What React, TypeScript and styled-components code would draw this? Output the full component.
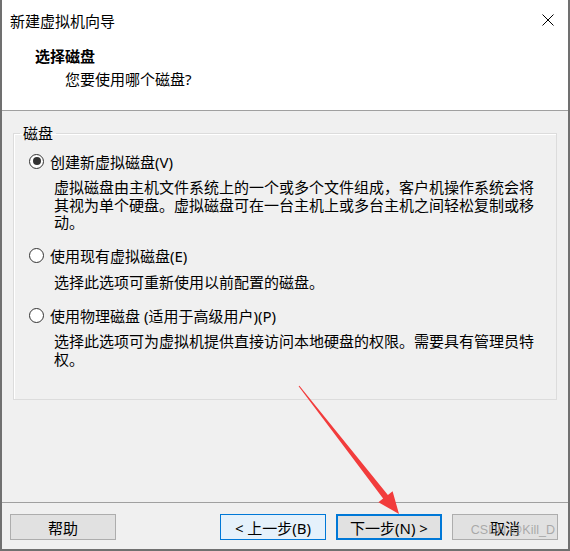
import styled, { createGlobalStyle } from "styled-components";

const GlobalStyle = createGlobalStyle`
  html, body {
    margin: 0;
    padding: 0;
    background: #ffffff;
  }
  body {
    font-family: "Noto Sans", "Noto Sans CJK SC", sans-serif;
    color: #000000;
  }
`;

const Window = styled.div`
  position: relative;
  width: 570px;
  height: 551px;
  box-sizing: border-box;
  border: 2px solid #707070;
  border-top: none;
  background: #f0f0f0;
  display: flex;
  flex-direction: column;
  overflow: hidden;
`;

const Header = styled.div`
  height: 110px;
  background: #ffffff;
  border-bottom: 1px solid #a0a0a0;
  display: flex;
  flex-direction: column;
`;

const TitleBar = styled.div`
  height: 40px;
  display: flex;
  align-items: center;
  justify-content: space-between;
  padding: 0 14px 0 8px;
  font-size: 15px;
`;

const CloseButton = styled.div`
  width: 12px;
  height: 12px;
  display: flex;
`;

const HeaderContent = styled.div`
  padding: 6px 0 0 33px;
  display: flex;
  flex-direction: column;
`;

const Heading = styled.div`
  font-size: 15px;
  font-weight: 700;
  line-height: 20px;
`;

const SubHeading = styled.div`
  font-size: 15px;
  line-height: 20px;
  margin: 3px 0 0 30px;
`;

const Body = styled.div`
  flex: 1;
  padding: 12px 11px 0 11px;
`;

const Group = styled.fieldset`
  margin: 0;
  box-sizing: border-box;
  height: 277px;
  border: 1px solid #dcdcdc;
  box-shadow: inset 1px 1px 0 #ffffff;
  padding: 8px 15px 0 15px;
  min-width: 0;
`;

const GroupLabel = styled.legend`
  font-size: 15px;
  line-height: 20px;
  padding: 0 3px;
  margin-left: -9px;
`;

const Option = styled.div`
  margin-bottom: 14px;
`;

const RadioRow = styled.label`
  display: flex;
  align-items: center;
  gap: 6px;
  height: 20px;
  font-size: 15px;
`;

const RadioCircle = styled.span<{ $checked?: boolean }>`
  width: 15px;
  height: 15px;
  box-sizing: border-box;
  border-radius: 50%;
  border: 1px solid #333333;
  background: #ffffff;
  display: flex;
  align-items: center;
  justify-content: center;

  &::after {
    content: "";
    width: 8px;
    height: 8px;
    border-radius: 50%;
    background: ${(p) => (p.$checked ? "#333333" : "transparent")};
  }
`;

const Description = styled.div`
  margin-top: 8px;
  padding-left: 25px;
  font-size: 15px;
  line-height: 17.5px;
  white-space: pre;
`;

const Footer = styled.div`
  border-top: 1px solid #a0a0a0;
  padding: 11px 10px 9px 8px;
  display: flex;
  align-items: center;
`;

const NavGroup = styled.div`
  margin-left: auto;
  display: flex;
  gap: 10px;
`;

const Button = styled.button<{ $state?: "normal" | "hover" | "focus" }>`
  all: unset;
  box-sizing: border-box;
  width: 106px;
  height: 26px;
  display: flex;
  align-items: center;
  justify-content: center;
  font-family: "Noto Sans", "Noto Sans CJK SC", sans-serif;
  font-size: 15px;
  color: #000000;
  background: ${(p) => (p.$state === "hover" ? "#e5f1fb" : "#e1e1e1")};
  border: ${(p) =>
    p.$state === "hover"
      ? "1px solid #0078d7"
      : p.$state === "focus"
      ? "2px solid #0078d7"
      : "1px solid #adadad"};
`;

const Arrow = styled.svg`
  position: absolute;
  left: 0;
  top: 0;
  pointer-events: none;
`;

const Watermark = styled.div`
  position: absolute;
  right: 13px;
  bottom: 12px;
  font-family: "Liberation Sans", sans-serif;
  font-size: 12.5px;
  color: rgba(150, 150, 150, 0.75);
  pointer-events: none;
`;

const options = [
  {
    label: "创建新虚拟磁盘(V)",
    checked: true,
    desc:
      "虚拟磁盘由主机文件系统上的一个或多个文件组成，客户机操作系统会将\n其视为单个硬盘。虚拟磁盘可在一台主机上或多台主机之间轻松复制或移\n动。",
  },
  {
    label: "使用现有虚拟磁盘(E)",
    checked: false,
    desc: "选择此选项可重新使用以前配置的磁盘。",
  },
  {
    label: "使用物理磁盘 (适用于高级用户)(P)",
    checked: false,
    desc: "选择此选项可为虚拟机提供直接访问本地硬盘的权限。需要具有管理员特\n权。",
  },
];

const App = () => {
  return (
    <>
      <GlobalStyle />
      <Window>
        <Header>
          <TitleBar>
            <span>新建虚拟机向导</span>
            <CloseButton>
              <svg width="12" height="12" viewBox="0 0 12 12">
                <path d="M0.5 0.5 L11.5 11.5 M11.5 0.5 L0.5 11.5" stroke="#000" strokeWidth="1" />
              </svg>
            </CloseButton>
          </TitleBar>
          <HeaderContent>
            <Heading>选择磁盘</Heading>
            <SubHeading>您要使用哪个磁盘?</SubHeading>
          </HeaderContent>
        </Header>

        <Body>
          <Group>
            <GroupLabel>磁盘</GroupLabel>
            {options.map((o) => (
              <Option key={o.label}>
                <RadioRow>
                  <RadioCircle $checked={o.checked} />
                  {o.label}
                </RadioRow>
                <Description>{o.desc}</Description>
              </Option>
            ))}
          </Group>
        </Body>

        <Footer>
          <Button>帮助</Button>
          <NavGroup>
            <Button $state="hover">&lt; 上一步(B)</Button>
            <Button $state="focus">下一步(N) &gt;</Button>
            <Button>取消</Button>
          </NavGroup>
        </Footer>

        <Arrow width="570" height="551" viewBox="0 0 570 551">
          <polygon
            points="296.6,386.3 381.1,498.5 376.4,502.2 397,514 390.6,491.2 385.9,494.9 297.4,385.7"
            fill="#f23c3c"
          />
        </Arrow>
        <Watermark>CSDN @Kill_D</Watermark>
      </Window>
    </>
  );
};

export default App;
